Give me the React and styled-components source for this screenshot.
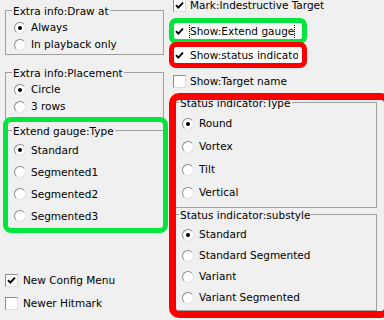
import React from "react";
import styled, { createGlobalStyle } from "styled-components";

const GlobalStyle = createGlobalStyle`
  html, body { margin: 0; padding: 0; background: #f0f0f0; }
  body {
    font-family: "DejaVu Sans", Verdana, sans-serif;
    font-size: 10.5px;
    color: #000;
  }
  #root { width: 384px; height: 320px; overflow: hidden; }
`;

const Dialog = styled.div`
  width: 384px;
  height: 320px;
  box-sizing: border-box;
  padding-left: 5px;
  display: flex;
  align-items: flex-start;
  gap: 9px;
  overflow: hidden;
`;

const Column = styled.div`
  flex: none;
  display: flex;
  flex-direction: column;
  width: ${(p) => p.$width}px;
`;

const GroupBox = styled.fieldset`
  box-sizing: border-box;
  flex: none;
  margin: ${(p) => p.$mt || 0}px 0 0;
  padding: 0;
  width: ${(p) => p.$width}px;
  height: ${(p) => p.$height}px;
  border: 1px solid #a0a0a0;
  min-width: 0;
`;

const Legend = styled.legend`
  margin-left: ${(p) => p.$ml}px;
  padding: 1px 1px 0;
  line-height: 12px;
  white-space: nowrap;
`;

const Options = styled.div`
  display: flex;
  flex-direction: column;
  padding: ${(p) => p.$pt}px 0 0 8px;
`;

const Row = styled.label`
  flex: none;
  display: flex;
  align-items: center;
  gap: ${(p) => p.$gap ?? 5}px;
  height: ${(p) => p.$h}px;
  margin-top: ${(p) => p.$mt || 0}px;
  white-space: nowrap;
`;

const Text = styled.span`
  line-height: 13px;
  overflow: hidden;
  ${(p) => (p.$clip ? `width: ${p.$clip}px;` : "")}
  ${(p) =>
    p.$focus
      ? `border-left: 1px dotted #000; border-right: 1px dotted #000; margin-left: -1px;`
      : ""}
`;

const RadioMark = styled.span`
  flex: none;
  box-sizing: border-box;
  width: 12px;
  height: 12px;
  border-radius: 50%;
  background: #fff;
  border: 1px solid;
  border-color: #8c8c8c #e2e2e2 #e2e2e2 #8c8c8c;
  display: flex;
  align-items: center;
  justify-content: center;
  &::after {
    content: "";
    width: 4px;
    height: 4px;
    border-radius: 50%;
    background: ${(p) => (p.$on ? "#000" : "transparent")};
  }
`;

const CheckMark = styled.span`
  flex: none;
  box-sizing: border-box;
  width: 13px;
  height: 13px;
  background: #fff;
  border: 1px solid;
  border-color: ${(p) => (p.$bare ? "#fff" : "#8c8c8c #dcdcdc #dcdcdc #8c8c8c")};
  display: flex;
  align-items: center;
  justify-content: center;
`;

const Highlight = styled.div`
  position: relative;
  flex: none;
  margin-top: ${(p) => p.$mt || 0}px;
  ${(p) => (p.$fill ? "background: #fff;" : "")}
  ${(p) => (p.$width ? `width: ${p.$width}px;` : "")}
  ${(p) => (p.$height ? `height: ${p.$height}px;` : "")}
  display: flex;
  flex-direction: column;
  &::after {
    content: "";
    position: absolute;
    pointer-events: none;
    top: ${(p) => -p.$in[0]}px;
    right: ${(p) => -p.$in[1]}px;
    bottom: ${(p) => -p.$in[2]}px;
    left: ${(p) => -p.$in[3]}px;
    border: ${(p) => p.$stroke}px solid ${(p) => p.$color};
    border-radius: ${(p) => p.$radius}px;
  }
`;

const GREEN = "#00e63c";
const RED = "#ff0000";

function Radio({ on, h, children }) {
  return (
    <Row $h={h}>
      <RadioMark $on={on} />
      <Text>{children}</Text>
    </Row>
  );
}

function Check({ on, h, mt, bare, gap, clip, focus, children }) {
  return (
    <Row $h={h} $mt={mt} $gap={gap}>
      <CheckMark $bare={bare}>
        {on && (
          <svg width="9" height="9" viewBox="0 0 9 9">
            <path d="M1 4.2 L3.3 6.6 L8 1.6" fill="none" stroke="#000" strokeWidth="1.9" />
          </svg>
        )}
      </CheckMark>
      <Text $clip={clip} $focus={focus}>{children}</Text>
    </Row>
  );
}

function Group({ title, ml, mt, width, height, pt, rowH, options }) {
  return (
    <GroupBox $mt={mt} $width={width} $height={height}>
      <Legend $ml={ml}>{title}</Legend>
      <Options $pt={pt}>
        {options.map((o, i) => (
          <Radio key={o} on={i === 0} h={rowH}>
            {o}
          </Radio>
        ))}
      </Options>
    </GroupBox>
  );
}

export default function App() {
  return (
    <>
      <GlobalStyle />
      <Dialog>
        <Column $width={159}>
          <Group
            title="Extra info:Draw at"
            ml={6}
            mt={4}
            width={159}
            height={51}
            pt={2}
            rowH={17}
            options={["Always", "In playback only"]}
          />
          <Group
            title="Extra info:Placement"
            ml={6}
            mt={11}
            width={159}
            height={53}
            pt={2}
            rowH={17}
            options={["Circle", "3 rows"]}
          />
          <Highlight $mt={5} $in={[7, 4, 4, 2]} $stroke={5} $radius={8} $color={GREEN}>
            <Group
              title="Extend gauge:Type"
              ml={6}
              width={159}
              height={105}
              pt={2}
              rowH={22}
              options={["Standard", "Segmented1", "Segmented2", "Segmented3"]}
            />
          </Highlight>
          <Check on h={23} mt={40}>New Config Menu</Check>
          <Check h={23}>Newer Hitmark</Check>
        </Column>

        <Column $width={211}>
          <Check on h={17} mt={-3} gap={4}>Mark:Indestructive Target</Check>
          <Highlight
            $mt={9}
            $fill
            $width={129}
            $height={16}
            $in={[5, 5, 5, 4]}
            $stroke={5}
            $radius={7}
            $color={GREEN}
          >
            <Check on bare h={16} gap={4} focus>Show:Extend gauge</Check>
          </Highlight>
          <Highlight
            $mt={8}
            $fill
            $width={129}
            $height={16}
            $in={[5, 5, 5, 4]}
            $stroke={5}
            $radius={7}
            $color={RED}
          >
            <Check on bare h={16} gap={4} clip={108}>Show:status indicator</Check>
          </Highlight>
          <Check h={17} mt={10} gap={4}>Show:Target name</Check>
          <Highlight $mt={6} $in={[3, 7, 7, 4]} $stroke={7} $radius={10} $color={RED}>
            <Group
              title="Status indicator:Type"
              ml={5}
              width={204}
              height={112}
              pt={3}
              rowH={23}
              options={["Round", "Vortex", "Tilt", "Vertical"]}
            />
            <Group
              title="Status indicator:substyle"
              ml={5}
              width={204}
              height={103}
              pt={3}
              rowH={21}
              options={["Standard", "Standard Segmented", "Variant", "Variant Segmented"]}
            />
          </Highlight>
        </Column>
      </Dialog>
    </>
  );
}
